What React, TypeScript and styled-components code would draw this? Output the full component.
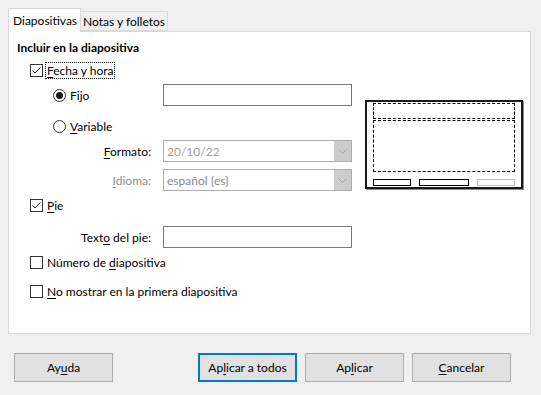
import React from 'react'
import styled, { createGlobalStyle } from 'styled-components'

const GlobalStyle = createGlobalStyle`
  html, body {
    margin: 0;
    padding: 0;
    background: #f0f0f0;
  }
  body {
    font-family: Lato, "Noto Sans", sans-serif;
    font-size: 12px;
    color: #000;
  }
`

const Dialog = styled.div`
  width: 541px;
  height: 395px;
  box-sizing: border-box;
  padding: 8px 10px 0 8px;
  display: flex;
  flex-direction: column;
`

const TabBar = styled.div`
  display: flex;
  align-items: flex-end;
  height: 23px;
`

const Tab = styled.div<{ active?: boolean }>`
  box-sizing: border-box;
  height: ${p => (p.active ? '24px' : '20px')};
  margin-bottom: ${p => (p.active ? '-1px' : '0')};
  padding: ${p => (p.active ? '4px 3px 0 4px' : '2px 2px 0 2px')};
  border: 1px solid #d9d9d9;
  border-bottom: ${p => (p.active ? 'none' : '1px solid #d9d9d9')};
  border-left: ${p => (p.active ? '1px solid #d9d9d9' : 'none')};
  background: ${p => (p.active ? '#fff' : '#f0f0f0')};
  position: relative;
  z-index: ${p => (p.active ? 1 : 0)};
  white-space: nowrap;
`

const Panel = styled.div`
  box-sizing: border-box;
  height: 303px;
  background: #fff;
  border: 1px solid #d9d9d9;
  padding: 8px 7px 0 8px;
  display: flex;
  gap: 13px;
`

const Form = styled.div`
  width: 335px;
  display: flex;
  flex-direction: column;
`

const Heading = styled.div`
  font-weight: bold;
  height: 15px;
  line-height: 15px;
`

const Row = styled.div<{ indent: number; top: number; tall?: boolean }>`
  display: flex;
  align-items: center;
  height: ${p => (p.tall ? '22px' : '16px')};
  margin-top: ${p => p.top}px;
  padding-left: ${p => p.indent}px;
`

const Mark = styled.span`
  display: flex;
  width: 13px;
  height: 13px;
  margin-right: 3px;
  flex-shrink: 0;
`

const Label = styled.span<{ focused?: boolean; w?: number }>`
  padding: 0 1px;
  line-height: 15px;
  width: ${p => (p.w ? `${p.w}px` : 'auto')};
  outline: ${p => (p.focused ? '1px dotted #000' : 'none')};
  outline-offset: 0;
  white-space: nowrap;
`

const Key = styled.span`
  text-decoration: underline;
  text-underline-offset: 2px;
`

const FieldLabel = styled.span<{ dim?: boolean }>`
  width: 134px;
  text-align: right;
  padding-right: 12px;
  box-sizing: content-box;
  color: ${p => (p.dim ? '#8d8d8d' : '#000')};
  white-space: nowrap;
`

const TextInput = styled.div`
  box-sizing: border-box;
  width: 189px;
  height: 22px;
  border: 1px solid #7a7a7a;
  background: #fff;
`

const Combo = styled.div`
  box-sizing: border-box;
  width: 189px;
  height: 22px;
  border: 1px solid #adadad;
  background: #fff;
  display: flex;
  align-items: center;
`

const ComboText = styled.span<{ shade: string }>`
  flex: 1;
  padding-left: 3px;
  color: ${p => p.shade};
`

const ComboButton = styled.span`
  width: 17px;
  height: 20px;
  background: #cccccc;
  display: flex;
  align-items: center;
  justify-content: center;
`

const Preview = styled.div`
  box-sizing: border-box;
  margin-top: 60px;
  width: 158px;
  height: 89px;
  border: 2px solid #1a1a1a;
  box-shadow: 1px 1px 0 #8a8a8a;
  padding: 1px 6px 0 6px;
  display: flex;
  flex-direction: column;
`

const DashBox = styled.div<{ h: number }>`
  box-sizing: border-box;
  height: ${p => p.h}px;
  border: 1px dashed #000;
  margin-bottom: 1px;
`

const FooterRow = styled.div`
  display: flex;
  justify-content: space-between;
  margin-top: 6px;
`

const FooterBox = styled.div<{ w: number; faded?: boolean }>`
  box-sizing: border-box;
  width: ${p => p.w}px;
  height: 7px;
  border: 1px solid ${p => (p.faded ? '#c0c0c0' : '#000')};
`

const ButtonBar = styled.div`
  display: flex;
  margin-top: 19px;
  padding-left: 6px;
  gap: 8px;
`

const Button = styled.div<{ primary?: boolean }>`
  box-sizing: border-box;
  width: 99px;
  height: 29px;
  background: #e1e1e1;
  border: ${p => (p.primary ? '2px solid #0078d7' : '1px solid #adadad')};
  display: flex;
  align-items: center;
  justify-content: center;
`

const Spacer = styled.div`
  width: 69px;
`

function Check({ checked }: { checked?: boolean }) {
  return (
    <Mark>
      <svg width="13" height="13" viewBox="0 0 13 13">
        <rect x="0.5" y="0.5" width="12" height="12" fill="#fff" stroke="#333" />
        {checked && <path d="M2.5 6.5 L5 9 L10.5 3.5" fill="none" stroke="#222" strokeWidth="1" />}
      </svg>
    </Mark>
  )
}

function Radio({ checked }: { checked?: boolean }) {
  return (
    <Mark>
      <svg width="13" height="13" viewBox="0 0 13 13">
        <circle cx="6.5" cy="6.5" r="6" fill="#fff" stroke="#333" />
        {checked && <circle cx="6.5" cy="6.5" r="3.5" fill="#1a1a1a" />}
      </svg>
    </Mark>
  )
}

function Chevron() {
  return (
    <svg width="9" height="5" viewBox="0 0 9 5">
      <path d="M0.5 0.5 L4.5 4.5 L8.5 0.5" fill="none" stroke="#a8a8a8" />
    </svg>
  )
}

export default function App() {
  return (
    <Dialog>
      <GlobalStyle />
      <TabBar>
        <Tab active>Diapositivas</Tab>
        <Tab>Notas y folletos</Tab>
      </TabBar>
      <Panel>
        <Form>
          <Heading>Incluir en la diapositiva</Heading>
          <Row indent={13} top={7}>
            <Check checked />
            <Label focused><Key>F</Key>echa y hora</Label>
          </Row>
          <Row indent={36} top={6} tall>
            <Radio checked />
            <Label w={92}>Fijo</Label>
            <TextInput />
          </Row>
          <Row indent={36} top={12}>
            <Radio />
            <Label><Key>V</Key>ariable</Label>
          </Row>
          <Row indent={0} top={6} tall>
            <FieldLabel><Key>F</Key>ormato:</FieldLabel>
            <Combo>
              <ComboText shade="#a0a0a0">20/10/22</ComboText>
              <ComboButton><Chevron /></ComboButton>
            </Combo>
          </Row>
          <Row indent={0} top={7} tall>
            <FieldLabel dim><Key>I</Key>dioma:</FieldLabel>
            <Combo>
              <ComboText shade="#8a8a8a">español {'{es}'}</ComboText>
              <ComboButton><Chevron /></ComboButton>
            </Combo>
          </Row>
          <Row indent={13} top={6}>
            <Check checked />
            <Label><Key>P</Key>ie</Label>
          </Row>
          <Row indent={0} top={13} tall>
            <FieldLabel>Text<Key>o</Key> del pie:</FieldLabel>
            <TextInput />
          </Row>
          <Row indent={13} top={6}>
            <Check />
            <Label>Número de <Key>d</Key>iapositiva</Label>
          </Row>
          <Row indent={13} top={13}>
            <Check />
            <Label><Key>N</Key>o mostrar en la primera diapositiva</Label>
          </Row>
        </Form>
        <Preview>
          <DashBox h={16} />
          <DashBox h={52} />
          <FooterRow>
            <FooterBox w={38} />
            <FooterBox w={50} />
            <FooterBox w={38} faded />
          </FooterRow>
        </Preview>
      </Panel>
      <ButtonBar>
        <Button>Ay<Key>u</Key>da</Button>
        <Spacer />
        <Button primary>Ap<Key>l</Key>icar a todos</Button>
        <Button>Ap<Key>l</Key>icar</Button>
        <Button><Key>C</Key>ancelar</Button>
      </ButtonBar>
    </Dialog>
  )
}
